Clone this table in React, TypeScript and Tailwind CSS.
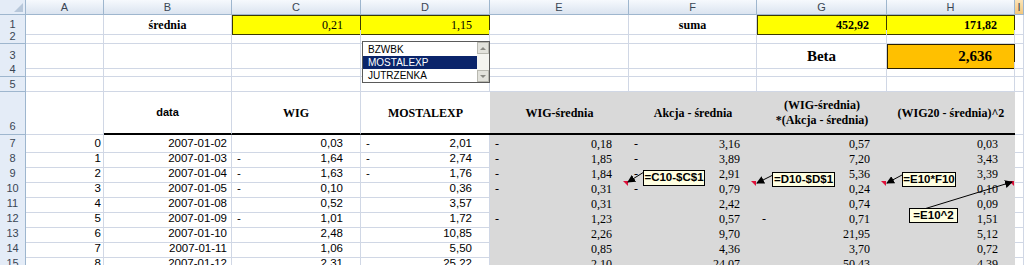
import React from "react";

const grid =
	"grid grid-cols-[26px_78px_128px_129px_129px_139px_128px_130px_128px_1fr]";
const gridLine = "border-r border-b border-[#d0d7e5]";
const serif = "font-['Liberation_Serif',serif]";
const sans = "font-['Liberation_Sans',Arial,sans-serif]";

const letters = ["A", "B", "C", "D", "E", "F", "G", "H", "I"];

// A, B, C, D, E, F, G, H
const rows: string[][] = [
	["0", "2007-01-02", "0,03", "-2,01", "-0,18", "-3,16", "0,57", "0,03"],
	["1", "2007-01-03", "-1,64", "-2,74", "-1,85", "-3,89", "7,20", "3,43"],
	["2", "2007-01-04", "-1,63", "-1,76", "-1,84", "-2,91", "5,36", "3,39"],
	["3", "2007-01-05", "-0,10", "0,36", "-0,31", "-0,79", "0,24", "0,10"],
	["4", "2007-01-08", "0,52", "3,57", "0,31", "2,42", "0,74", "0,09"],
	["5", "2007-01-09", "-1,01", "1,72", "-1,23", "0,57", "-0,71", "1,51"],
	["6", "2007-01-10", "2,48", "10,85", "2,26", "9,70", "21,95", "5,12"],
	["7", "2007-01-11", "1,06", "5,50", "0,85", "4,36", "3,70", "0,72"],
	["8", "2007-01-12", "2,31", "25,22", "2,10", "24,07", "50,43", "4,39"],
];

const RowHead = ({ n, bottom }: { n: number; bottom?: boolean }) => (
	<div
		className={`flex justify-center bg-[#e4ecf7] border-r border-b border-[#9eb6ce] text-[11px] leading-none text-[#3a4654] ${sans} ${
			bottom ? "items-end pb-[2px]" : "items-center"
		}`}
	>
		{n}
	</div>
);

const Acc = ({
	v,
	className,
}: {
	v: string;
	className: string;
}) => {
	const neg = v.startsWith("-");
	return (
		<div
			className={`flex items-center justify-between pl-[5px] pr-[17px] text-black ${className}`}
		>
			<span>{neg ? "-" : ""}</span>
			<span>{neg ? v.slice(1) : v}</span>
		</div>
	);
};

const Blank = ({ extra = "" }: { extra?: string }) => (
	<div className={`${gridLine} ${extra}`} />
);

const Note = ({ text, className }: { text: string; className: string }) => (
	<div
		className={`absolute flex items-center justify-center bg-[#ffffe1] border border-black text-[11.5px] font-bold leading-none ${sans} ${className}`}
	>
		{text}
	</div>
);

export default function App() {
	return (
		<div className="relative w-[1024px] h-[265px] overflow-hidden bg-white">
			{/* column headers */}
			<div className={`${grid} h-[15px]`}>
				<div className="relative bg-[#e4ecf7] border-r border-b border-[#9eb6ce]">
					<div className="absolute right-[2px] bottom-[2px] w-0 h-0 border-l-[9px] border-l-transparent border-b-[9px] border-b-[#b7c7da]" />
				</div>
				{letters.map((l) => (
					<div
						key={l}
						className={`flex items-center justify-center border-r border-b border-[#9eb6ce] text-[11px] leading-none text-[#3a4654] ${sans} ${
							l === "I"
								? "bg-linear-to-b from-[#fbe3b6] to-[#f4c77c]"
								: "bg-linear-to-b from-[#f6f9fd] to-[#dbe4f0]"
						}`}
					>
						{l}
					</div>
				))}
			</div>

			{/* row 1 */}
			<div className={`${grid} h-[15px]`}>
				<RowHead n={1} />
				<Blank />
				<div
					className={`${gridLine} flex items-center justify-center text-[12px] font-bold ${serif}`}
				>
					średnia
				</div>
				<Acc v="0,21" className={`bg-[#ffff00] border border-[#3d3a00] text-[12px] ${serif}`} />
				<Acc v="1,15" className={`bg-[#ffff00] border border-l-0 border-[#3d3a00] text-[12px] ${serif}`} />
				<Blank />
				<div
					className={`${gridLine} flex items-center justify-center text-[12px] font-bold ${serif}`}
				>
					suma
				</div>
				<Acc v="452,92" className={`bg-[#ffff00] border border-[#3d3a00] text-[12px] font-bold ${serif}`} />
				<Acc v="171,82" className={`bg-[#ffff00] border border-l-0 border-[#3d3a00] text-[12px] font-bold ${serif}`} />
				<Blank />
			</div>

			{/* row 2 */}
			<div className={`${grid} h-[14px]`}>
				<RowHead n={2} />
				{Array.from({ length: 9 }).map((_, i) => (
					<Blank key={i} />
				))}
			</div>

			{/* row 3 */}
			<div className={`${grid} h-[18px]`}>
				<RowHead n={3} />
				{Array.from({ length: 6 }).map((_, i) => (
					<Blank key={i} />
				))}
				<div
					className={`${gridLine} flex items-center justify-center text-[15px] font-bold ${serif}`}
				>
					Beta
				</div>
				<div
					className={`flex items-center justify-end pr-[22px] bg-[#ffc000] border border-[#2b2000] text-[15px] font-bold ${serif}`}
				>
					2,636
				</div>
				<Blank />
			</div>

			{/* rows 4-5 */}
			{[4, 5].map((n) => (
				<div key={n} className={`${grid} h-[15px]`}>
					<RowHead n={n} />
					{Array.from({ length: 9 }).map((_, i) => (
						<Blank key={i} />
					))}
				</div>
			))}

			{/* row 6: table header */}
			<div className={`${grid} h-[43px]`}>
				<RowHead n={6} bottom />
				<Blank />
				<div
					className={`flex items-center justify-center border-r border-[#d0d7e5] border-b-2 border-b-black text-[11px] font-bold ${sans}`}
				>
					data
				</div>
				<div
					className={`flex items-center justify-center border-r border-[#d0d7e5] border-b-2 border-b-black text-[12px] font-bold ${serif}`}
				>
					WIG
				</div>
				<div
					className={`flex items-center justify-center border-b-2 border-b-black text-[12px] font-bold ${serif}`}
				>
					MOSTALEXP
				</div>
				<div
					className={`flex items-center justify-center bg-[#d9d9d9] border-b-2 border-b-black text-[12px] font-bold ${serif}`}
				>
					WIG-średnia
				</div>
				<div
					className={`flex items-center justify-center bg-[#d9d9d9] border-b-2 border-b-black text-[12px] font-bold ${serif}`}
				>
					Akcja - średnia
				</div>
				<div
					className={`flex flex-col items-center justify-center bg-[#d9d9d9] border-b-2 border-b-black text-[12px] font-bold leading-[15px] ${serif}`}
				>
					<span>(WIG-średnia)</span>
					<span>*(Akcja - średnia)</span>
				</div>
				<div
					className={`flex items-center justify-center bg-[#d9d9d9] border-b-2 border-b-black text-[12px] font-bold ${serif}`}
				>
					(WIG20 - średnia)^2
				</div>
				<Blank />
			</div>

			{/* rows 7-15: data */}
			{rows.map((r, i) => (
				<div key={i} className={`${grid} h-[15px]`}>
					<RowHead n={i + 7} />
					<div
						className={`${gridLine} flex items-center justify-end pr-[2px] text-[11.5px] ${sans}`}
					>
						{r[0]}
					</div>
					<div
						className={`${gridLine} flex items-center justify-end pr-[4px] text-[11.5px] ${sans}`}
					>
						{r[1]}
					</div>
					<Acc v={r[2]} className={`${gridLine} text-[11.5px] ${sans}`} />
					<Acc v={r[3]} className={`${gridLine} text-[11.5px] ${sans}`} />
					<Acc v={r[4]} className={`bg-[#d9d9d9] text-[12px] ${serif}`} />
					<Acc v={r[5]} className={`bg-[#d9d9d9] text-[12px] ${serif}`} />
					<Acc v={r[6]} className={`bg-[#d9d9d9] text-[12px] ${serif}`} />
					<Acc v={r[7]} className={`bg-[#d9d9d9] text-[12px] ${serif}`} />
					<Blank />
				</div>
			))}

			{/* list box control */}
			<div
				className={`absolute left-[362px] top-[41px] w-[128px] h-[42px] flex bg-white border border-[#5a5a5a] text-[10px] leading-[13px] ${sans}`}
			>
				<div className="flex-1 flex flex-col pt-[1px]">
					<div className="h-[13px] pl-[5px] text-black">BZWBK</div>
					<div className="h-[13px] pl-[5px] bg-[#0a246a] text-white">MOSTALEXP</div>
					<div className="h-[13px] pl-[5px] text-black">JUTRZENKA</div>
				</div>
				<div className="w-[12px] flex flex-col justify-between bg-[#f4f4f0]">
					<div className="h-[12px] flex items-center justify-center bg-[#e2e2dc] border border-[#b8b8b0]">
						<div className="w-0 h-0 border-x-[3px] border-x-transparent border-b-[3px] border-b-[#8a8a84]" />
					</div>
					<div className="h-[12px] flex items-center justify-center bg-[#e2e2dc] border border-[#b8b8b0]">
						<div className="w-0 h-0 border-x-[3px] border-x-transparent border-t-[3px] border-t-[#8a8a84]" />
					</div>
				</div>
			</div>

			{/* comment arrows and indicators */}
			<svg
				className="absolute inset-0 pointer-events-none"
				width={1024}
				height={265}
			>
				<defs>
					<marker
						id="ah"
						markerWidth="8"
						markerHeight="8"
						refX="7"
						refY="4"
						orient="auto"
						markerUnits="userSpaceOnUse"
					>
						<path d="M0,0 L8,4 L0,8 z" fill="#000" />
					</marker>
				</defs>
				{[628, 756, 886, 1014].map((x) => (
					<path
						key={x}
						d={`M${x - 5},181 L${x},181 L${x},186 z`}
						fill="#e0103a"
					/>
				))}
				<line x1="644" y1="172" x2="628" y2="182" stroke="#000" strokeWidth="1" markerEnd="url(#ah)" />
				<line x1="773" y1="175" x2="757" y2="183" stroke="#000" strokeWidth="1" markerEnd="url(#ah)" />
				<line x1="902" y1="175" x2="887" y2="183" stroke="#000" strokeWidth="1" markerEnd="url(#ah)" />
				<line x1="924" y1="209" x2="1012" y2="182" stroke="#000" strokeWidth="1" markerEnd="url(#ah)" />
			</svg>

			{/* comment boxes */}
			<Note text="=C10-$C$1" className="left-[643px] top-[170px] w-[62px] h-[16px]" />
			<Note text="=D10-$D$1" className="left-[772px] top-[172px] w-[63px] h-[15px]" />
			<Note text="=E10*F10" className="left-[902px] top-[172px] w-[54px] h-[15px]" />
			<Note text="=E10^2" className="left-[909px] top-[208px] w-[49px] h-[15px]" />
		</div>
	);
}
